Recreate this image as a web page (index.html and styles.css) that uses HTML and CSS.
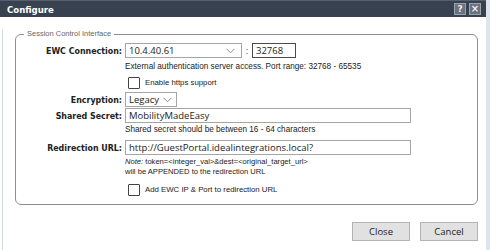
FILE: index.html
```html
<!DOCTYPE html>
<html lang="en">
<head>
    <meta charset="UTF-8">
    <meta name="viewport" content="width=device-width, initial-scale=1.0">
    <title>Configure</title>
    <link rel="stylesheet" href="styles.css">
</head>
<body>
    <div class="dialog">
        <div class="titlebar">
            <span class="title">Configure</span>
            <div class="tools">
                <span class="tool">?</span>
                <span class="tool tool-close">&#215;</span>
            </div>
        </div>

        <div class="content">
            <fieldset class="group">
                <legend>Session Control Interface</legend>

                <div class="row row-ewc">
                    <label class="label">EWC Connection:</label>
                    <div class="select select-ip">
                        <span>10.4.40.61</span>
                        <svg class="chevron" width="9" height="6" viewBox="0 0 9 6"><polyline points="0.5,0.8 4.5,4.8 8.5,0.8" fill="none" stroke="#8a8a8a" stroke-width="1"/></svg>
                    </div>
                    <span class="colon">:</span>
                    <input type="text" class="text port" value="32768">
                </div>
                <div class="hint">External authentication server access. Port range: 32768 - 65535</div>
                <label class="check check-https"><span class="box"></span>Enable https support</label>

                <div class="row row-enc">
                    <label class="label">Encryption:</label>
                    <div class="select select-enc">
                        <span>Legacy</span>
                        <svg class="chevron" width="9" height="6" viewBox="0 0 9 6"><polyline points="0.5,0.8 4.5,4.8 8.5,0.8" fill="none" stroke="#8a8a8a" stroke-width="1"/></svg>
                    </div>
                </div>
                <div class="row row-secret">
                    <label class="label">Shared Secret:</label>
                    <input type="text" class="text wide" value="MobilityMadeEasy">
                </div>
                <div class="hint hint-secret">Shared secret should be between 16 - 64 characters</div>

                <div class="row row-url">
                    <label class="label">Redirection URL:</label>
                    <input type="text" class="text wide" value="http://GuestPortal.idealintegrations.local?">
                </div>
                <div class="note">
                    <div><em>Note:</em> token=&lt;integer_val&gt;&amp;dest=&lt;original_target_url&gt;</div>
                    <div>will be APPENDED to the redirection URL</div>
                </div>
                <label class="check check-port"><span class="box"></span>Add EWC IP &amp; Port to redirection URL</label>
            </fieldset>

            <div class="buttons">
                <button type="button">Close</button>
                <button type="button">Cancel</button>
            </div>
        </div>
    </div>
</body>
</html>
```

FILE: styles.css
```css
body {
    margin: 0;
    background-color: #dfe5ec; /* page behind the dialog */
    font-family: "Liberation Sans", Arial, sans-serif;
    color: #1a1a1a;
}
.dialog {
    width: 486px;
    height: 250px;
    background-color: #fff;
    overflow: hidden;
}
.titlebar {
    height: 17px;
    background-color: #37414f;
    border-top: 1px solid #55606e;
    box-sizing: border-box;
    display: flex;
    align-items: center;
    justify-content: space-between;
    padding: 0 5px 0 7px;
}
.title {
    font-family: "DejaVu Sans Condensed", "DejaVu Sans", sans-serif;
    font-weight: bold;
    font-size: 9.5px;
    color: #fff;
}
.tools {
    display: flex;
    gap: 3px;
}
.tool {
    width: 10px;
    height: 10px;
    border: 1px solid #9ba3ad;
    background-color: #6a727d;
    color: #eef0f2;
    font-family: "DejaVu Sans", sans-serif;
    font-weight: bold;
    font-size: 9px;
    line-height: 10px;
    text-align: center;
}
.tool-close {
    font-size: 10px;
}
.content {
    margin-left: 2px;
    border-left: 1px solid #d4d9df;
    height: 233px;
}
.group {
    margin: 12px 0 0 12px;
    width: 463px;
    box-sizing: border-box;
    border: 1px solid #8e8e8e;
    border-radius: 6px;
    padding: 4px 0 9px 0;
}
.group legend {
    margin-left: 8px;
    padding: 0 3px;
    font-size: 7.5px;
    line-height: 10px;
    color: #666;
}
.row {
    display: flex;
    align-items: center;
    height: 15px;
}
.label {
    width: 106px;
    padding-right: 3px;
    text-align: right;
    font-family: "DejaVu Sans Condensed", "DejaVu Sans", sans-serif;
    font-weight: bold;
    font-size: 8.8px;
    color: #222;
}
.select,
.text {
    height: 15px;
    box-sizing: border-box;
    border: 1px solid #a5a5a5;
    background-color: #fff;
    font-family: "Open Sans", sans-serif;
    font-size: 9.5px;
    color: #222;
}
.select {
    display: flex;
    align-items: center;
    justify-content: space-between;
    padding: 0 6px 0 3px;
}
.text {
    padding: 0 3px;
    margin: 0;
    outline: none;
}
.select-ip {
    width: 117px;
}
.colon {
    width: 10px;
    text-align: center;
    font-size: 9px;
    color: #444;
}
.port {
    width: 44px;
    border-color: #4a4a4a;
}
.select-enc {
    width: 52px;
    padding-right: 4px;
}
.wide {
    width: 286px;
}
.hint {
    margin: 4px 0 0 109px;
    font-size: 8.2px;
    line-height: 10px;
}
.check {
    display: flex;
    align-items: center;
    margin-left: 112px;
    height: 11px;
    font-size: 7.8px;
}
.box {
    width: 10px;
    height: 10px;
    border: 1px solid #444;
    border-radius: 1px;
    margin-right: 5px;
}
.check-https {
    margin-top: 5px;
}
.row-enc {
    margin-top: 4px;
}
.row-secret {
    margin-top: 1px;
}
.hint-secret {
    margin-top: 2px;
}
.row-url {
    margin-top: 5px;
}
.note {
    margin: 2px 0 0 109px;
    font-size: 7.6px;
    line-height: 9.5px;
}
.check-port {
    margin-top: 8px;
}
.buttons {
    display: flex;
    justify-content: flex-end;
    gap: 10px;
    margin-top: 17px;
    padding-right: 8px;
}
.buttons button {
    width: 58px;
    height: 19px;
    border: 1px solid #b4b4b4;
    background-color: #e1e1e1;
    font-family: "Open Sans", sans-serif;
    font-size: 9.5px;
    color: #222;
    padding: 0;
}
```
